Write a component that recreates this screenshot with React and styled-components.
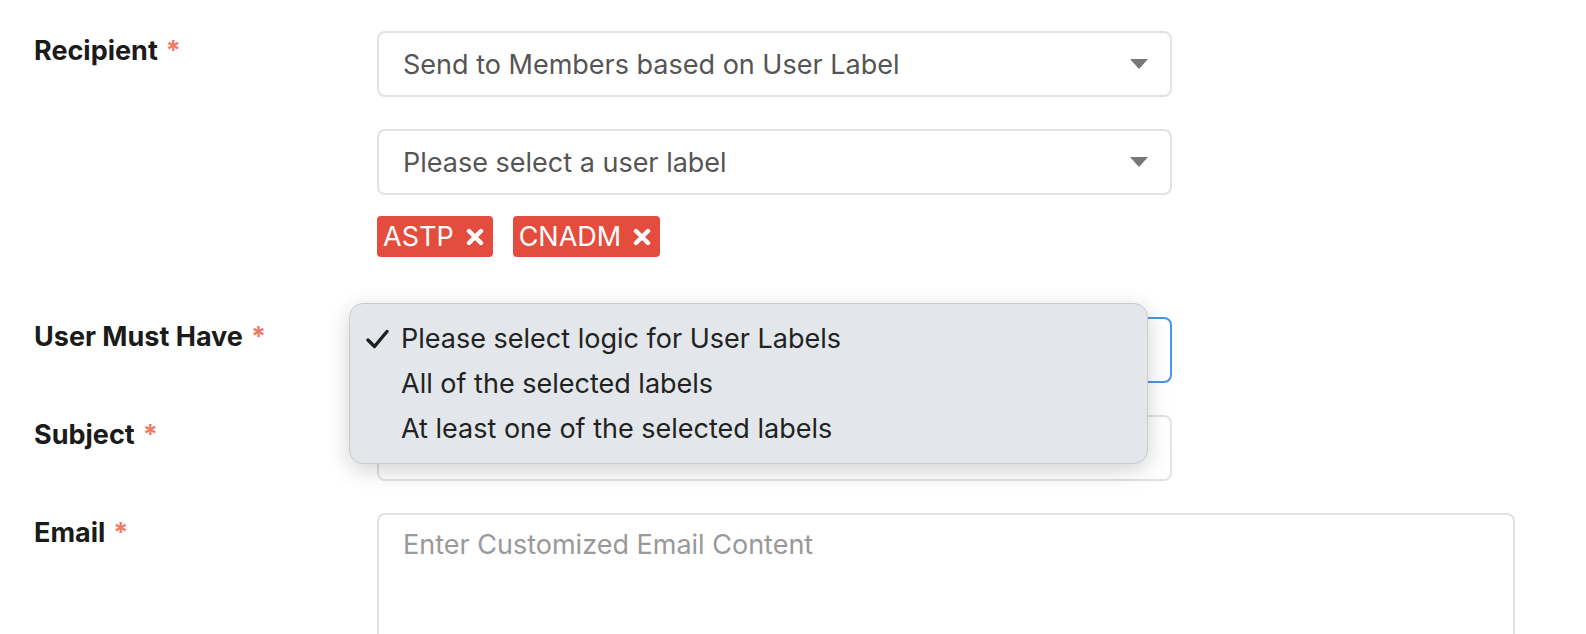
import React from "react"
import styled, { createGlobalStyle } from "styled-components"

const GlobalStyle = createGlobalStyle`
  html, body {
    margin: 0;
    background: #fff;
    overflow: hidden;
    font-family: Inter, "Liberation Sans", sans-serif;
  }
`

const Form = styled.div`
  height: 634px;
  box-sizing: border-box;
  overflow: hidden;
  padding: 31px 0 0 34px;
  display: flex;
  flex-direction: column;
  gap: 32px;
`

const Row = styled.div`
  display: grid;
  grid-template-columns: 343px 1fr;
  align-items: start;
`

const Label = styled.div`
  padding-top: 4px;
  font-size: 27px;
  line-height: 31px;
  font-weight: 700;
  color: #1b1b1b;
`

const Star = styled.span`
  color: #f07a66;
  margin-left: 8px;
`

const Field = styled.div`
  position: relative;
  display: flex;
  flex-direction: column;
  width: ${p => p.$wide ? "1138px" : "795px"};
`

const Select = styled.div`
  box-sizing: border-box;
  height: 66px;
  border: 2px solid ${p => p.$focus ? "#4a93ee" : "#e2e2e2"};
  border-radius: 8px;
  padding: 0 22px 0 24px;
  display: flex;
  align-items: center;
  justify-content: space-between;
  font-size: 27px;
  color: ${p => p.$muted ? "#999" : "#555"};
  & + & {
    margin-top: 32px;
  }
`

const Arrow = styled.span`
  width: 0;
  height: 0;
  border-left: 9px solid transparent;
  border-right: 9px solid transparent;
  border-top: 10px solid #777;
`

const Tags = styled.div`
  display: flex;
  gap: 20px;
  margin-top: 21px;
  margin-bottom: 28px;
`

const Tag = styled.span`
  height: 41px;
  box-sizing: border-box;
  background: #e44d3e;
  color: #fff;
  border-radius: 4px;
  padding: 0 9px 0 6px;
  display: inline-flex;
  align-items: center;
  gap: 12px;
  font-size: 27px;
`

const TextArea = styled.div`
  box-sizing: border-box;
  height: 220px;
  border: 2px solid #e2e2e2;
  border-radius: 8px;
  padding: 14px 24px;
  font-size: 27px;
  line-height: 31px;
  color: #999;
`

const Menu = styled.div`
  position: absolute;
  left: -28px;
  top: -14px;
  width: 799px;
  box-sizing: border-box;
  padding: 12px 0;
  background: #e3e7eb;
  border: 1px solid #c9cccf;
  border-radius: 14px;
  box-shadow: 0 6px 22px rgba(0, 0, 0, 0.18);
  z-index: 2;
`

const Option = styled.div`
  height: 45px;
  display: flex;
  align-items: center;
  padding-left: 16px;
  font-size: 27px;
  color: #222;
`

const CheckSlot = styled.span`
  width: 35px;
  display: inline-flex;
  align-items: center;
`

const XIcon = () => (
  <svg width="18" height="18" viewBox="0 0 18 18">
    <path d="M3 3 L15 15 M15 3 L3 15" stroke="#fff" strokeWidth="4.4" strokeLinecap="round" />
  </svg>
)

const Check = () => (
  <svg width="23" height="20" viewBox="0 0 23 20">
    <path d="M2 11 L8.5 17.5 L21 2.5" stroke="#1f1f1f" strokeWidth="3.4" fill="none" strokeLinecap="round" strokeLinejoin="round" />
  </svg>
)

const options = [
  "Please select logic for User Labels",
  "All of the selected labels",
  "At least one of the selected labels",
]

export default function App() {
  return (
    <>
      <GlobalStyle />
      <Form>
        <Row>
          <Label>Recipient<Star>*</Star></Label>
          <Field>
            <Select>Send to Members based on User Label<Arrow /></Select>
            <Select>Please select a user label<Arrow /></Select>
            <Tags>
              <Tag>ASTP<XIcon /></Tag>
              <Tag>CNADM<XIcon /></Tag>
            </Tags>
          </Field>
        </Row>

        <Row>
          <Label>User Must Have<Star>*</Star></Label>
          <Field>
            <Select $focus>Please select logic for User Labels<Arrow /></Select>
            <Menu>
              {options.map((o, i) => (
                <Option key={o}>
                  <CheckSlot>{i === 0 && <Check />}</CheckSlot>
                  {o}
                </Option>
              ))}
            </Menu>
          </Field>
        </Row>

        <Row>
          <Label>Subject<Star>*</Star></Label>
          <Field>
            <Select $muted>Enter Customized Email Subject</Select>
          </Field>
        </Row>

        <Row>
          <Label>Email<Star>*</Star></Label>
          <Field $wide>
            <TextArea>Enter Customized Email Content</TextArea>
          </Field>
        </Row>
      </Form>
    </>
  )
}
